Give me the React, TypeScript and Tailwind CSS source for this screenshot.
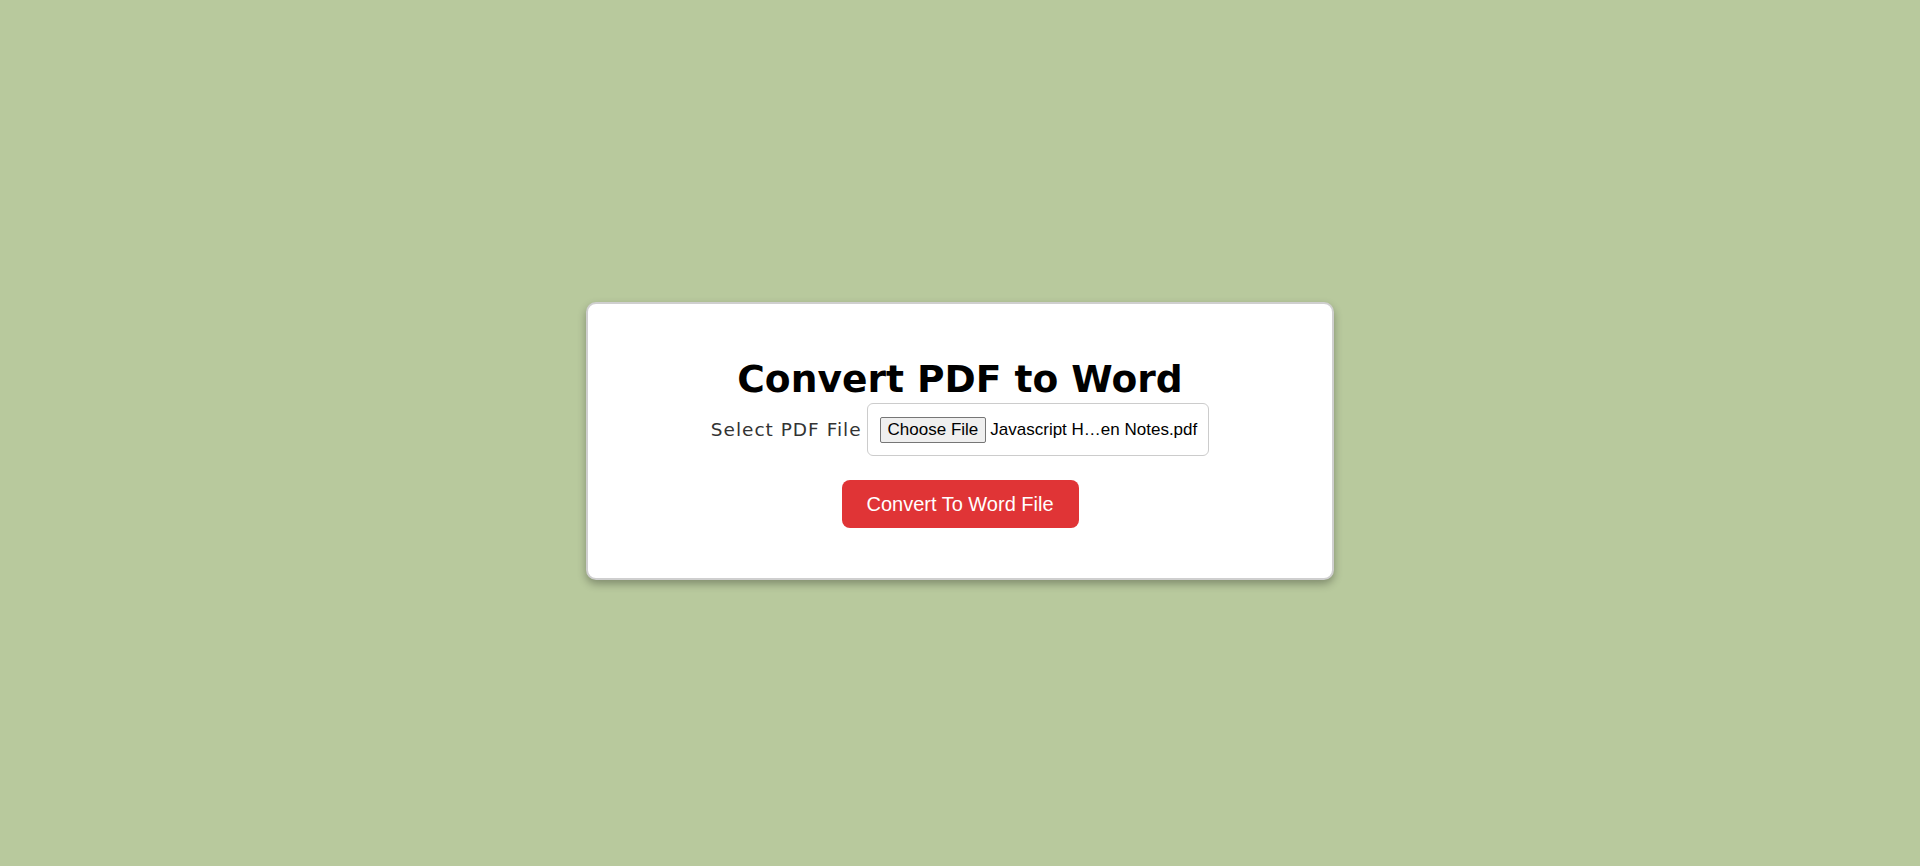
import React from "react";

export default function App() {
  return (
    <div className="min-h-[866px] w-full bg-[#b8c99d] pt-[302px]">
      <div className="mx-auto flex w-[748px] flex-col items-center rounded-[10px] border-2 border-[#cfcfcf] bg-white pt-[51px] pb-[50px] shadow-[0_4px_8px_rgba(0,0,0,0.3)]">
        <h1 className="font-['DejaVu_Sans',sans-serif] text-[37.6px] leading-[48px] font-bold text-black">
          Convert PDF to Word
        </h1>
        <div className="flex items-center gap-[5px]">
          <label className="font-['DejaVu_Sans',sans-serif] text-[18.5px] tracking-[1px] font-normal text-[#333]">
            Select PDF File
          </label>
          <div className="flex h-[53px] items-center gap-[4px] rounded-[6px] border border-[#cccccc] pr-[11px] pl-[12px] font-['Liberation_Sans',Arial,sans-serif] text-[17px] text-black">
            <span className="rounded-[2px] border border-[#767676] bg-[#efefef] px-[7px] leading-[24px]">
              Choose File
            </span>
            <span>Javascript H…en Notes.pdf</span>
          </div>
        </div>
        <button className="mt-[24px] h-[48px] w-[237px] rounded-[8px] bg-[#e03436] font-['Liberation_Sans',Arial,sans-serif] text-[20px] text-white">
          Convert To Word File
        </button>
      </div>
    </div>
  );
}
